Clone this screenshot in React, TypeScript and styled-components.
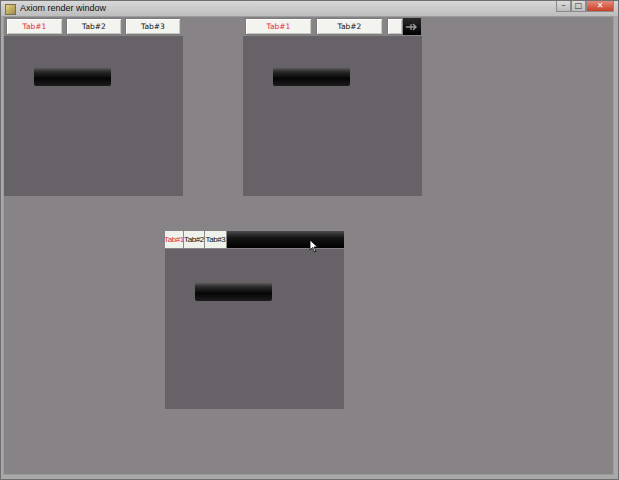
import React from "react";
import styled, { createGlobalStyle } from "styled-components";

const Global = createGlobalStyle`
  html, body { margin: 0; padding: 0; background: #8a888a; }
  body { width: 619px; height: 480px; overflow: hidden; font-family: "DejaVu Sans", "Liberation Sans", sans-serif; }
`;

const Window = styled.div`
  width: 619px;
  height: 480px;
  display: flex;
  flex-direction: column;
  background: #a9a9a9;
  box-sizing: border-box;
  border: 1px solid #6e6e6e;
`;

const TitleBar = styled.div`
  height: 15px;
  flex: none;
  display: flex;
  align-items: flex-start;
  background: linear-gradient(#d8d8d8, #bdbdbd);
`;

const TitleIcon = styled.div`
  width: 9px;
  height: 9px;
  margin: 3px 4px 0 4px;
  background: linear-gradient(135deg, #e8d27a, #9a8a50);
  border: 1px solid #7a7050;
`;

const TitleText = styled.div`
  flex: 1;
  font-family: "Liberation Sans", sans-serif;
  font-size: 9px;
  line-height: 15px;
  color: #111;
`;

const Caption = styled.div`
  display: flex;
  margin-right: 4px;
`;

const CapBtn = styled.div<{ $w: number; $close?: boolean }>`
  width: ${(p) => p.$w}px;
  height: 11px;
  box-sizing: border-box;
  border: 1px solid #8a8a8a;
  border-top: none;
  background: ${(p) => (p.$close ? "linear-gradient(#e58a78, #c8402a)" : "linear-gradient(#dcdcdc, #bcbcbc)")};
  display: flex;
  align-items: center;
  justify-content: center;
  color: ${(p) => (p.$close ? "#fff" : "#333")};
  font-size: 8px;
  line-height: 1;
  font-family: "DejaVu Sans", sans-serif;
`;

const Frame = styled.div`
  flex: 1;
  display: flex;
  padding: 0 4px 4px 2px;
  min-height: 0;
`;

const Client = styled.div`
  position: relative;
  flex: 1;
  background: #878386;
  border: 1px solid #9c9c9c;
  overflow: hidden;
`;

const Panel = styled.div<{ $x: number; $y: number }>`
  position: absolute;
  left: ${(p) => p.$x}px;
  top: ${(p) => p.$y}px;
  width: 179px;
  height: 179px;
  display: flex;
  flex-direction: column;
  background: #676267;
`;

const TabBar = styled.div<{ $pad: number; $gap: number }>`
  height: 19px;
  box-sizing: border-box;
  flex: none;
  display: flex;
  align-items: stretch;
  gap: ${(p) => p.$gap}px;
  padding: 1px 0 1px ${(p) => p.$pad}px;
  background: #878386;
`;

const Tab = styled.div<{ $w: number; $active?: boolean; $tight?: boolean }>`
  width: ${(p) => p.$w}px;
  flex: none;
  box-sizing: border-box;
  border: ${(p) => (p.$tight ? "none" : "1px solid #7a7a7a")};
  border-right: 1px solid #8a8a8a;
  box-shadow: ${(p) => (p.$tight ? "none" : "inset 1px 1px 0 #ffffff, inset -1px -1px 0 #c9c9c4")};
  background: ${(p) => (p.$tight ? "#eef2ea" : "#f3f3ef")};
  color: ${(p) => (p.$active ? "#e0303a" : "#111")};
  font-family: ${(p) => (p.$tight ? '"Liberation Sans", sans-serif' : '"DejaVu Sans", sans-serif')};
  font-size: ${(p) => (p.$tight ? 8 : 7.5)}px;
  letter-spacing: ${(p) => (p.$tight ? -0.4 : 0)}px;
  display: flex;
  align-items: center;
  justify-content: center;
  white-space: nowrap;
  overflow: visible;
`;

const EndGroup = styled.div`
  display: flex;
  flex: none;
`;

const ArrowBtn = styled.div`
  width: 18px;
  flex: none;
  background: linear-gradient(#2a2a2a, #000);
  display: flex;
  align-items: center;
  justify-content: center;
`;

const Filler = styled.div`
  flex: 1;
  background: linear-gradient(#4a4a4a 0%, #151515 40%, #000 100%);
`;

const Content = styled.div<{ $top: number }>`
  flex: 1;
  padding: ${(p) => p.$top}px 0 0 30px;
`;

const Bar = styled.div`
  width: 77px;
  height: 19px;
  border-radius: 2px;
  background: linear-gradient(#6a6668 0%, #2a2a2a 25%, #050505 60%, #1c1c1c 100%);
`;

const Cursor = styled.svg`
  position: absolute;
  left: 305px;
  top: 222px;
`;

export default function App() {
  return (
    <>
      <Global />
      <Window>
        <TitleBar>
          <TitleIcon />
          <TitleText>Axiom render window</TitleText>
          <Caption>
            <CapBtn $w={15}>–</CapBtn>
            <CapBtn $w={15}>□</CapBtn>
            <CapBtn $w={28} $close>✕</CapBtn>
          </Caption>
        </TitleBar>
        <Frame>
          <Client>
            <Panel $x={0} $y={0}>
              <TabBar $pad={2} $gap={3}>
                <Tab $w={57} $active>Tab#1</Tab>
                <Tab $w={56}>Tab#2</Tab>
                <Tab $w={56}>Tab#3</Tab>
              </TabBar>
              <Content $top={31}>
                <Bar />
              </Content>
            </Panel>
            <Panel $x={239} $y={0}>
              <TabBar $pad={2} $gap={4}>
                <Tab $w={67} $active>Tab#1</Tab>
                <Tab $w={67}>Tab#2</Tab>
                <EndGroup>
                  <Tab $w={16} />
                  <ArrowBtn>
                    <svg width="14" height="10" viewBox="0 0 14 10">
                      <path d="M1 5 H11 M8 2 L11 5 L8 8" stroke="#9a9a9a" strokeWidth="1.4" fill="none" />
                      <path d="M6 2 V8" stroke="#9a9a9a" strokeWidth="1.2" />
                    </svg>
                  </ArrowBtn>
                </EndGroup>
              </TabBar>
              <Content $top={31}>
                <Bar />
              </Content>
            </Panel>
            <Panel $x={161} $y={213}>
              <TabBar $pad={0} $gap={0}>
                <Tab $w={19} $active $tight>Tab#1</Tab>
                <Tab $w={21} $tight>Tab#2</Tab>
                <Tab $w={22} $tight>Tab#3</Tab>
                <Filler />
              </TabBar>
              <Content $top={33}>
                <Bar />
              </Content>
            </Panel>
            <Cursor width="12" height="14" viewBox="0 0 12 14">
              <path d="M1 1 L1 11 L3.5 8.5 L5.5 13 L7 12.3 L5 8 L8.5 8 Z" fill="#fff" stroke="#000" strokeWidth="0.8" />
            </Cursor>
          </Client>
        </Frame>
      </Window>
    </>
  );
}
